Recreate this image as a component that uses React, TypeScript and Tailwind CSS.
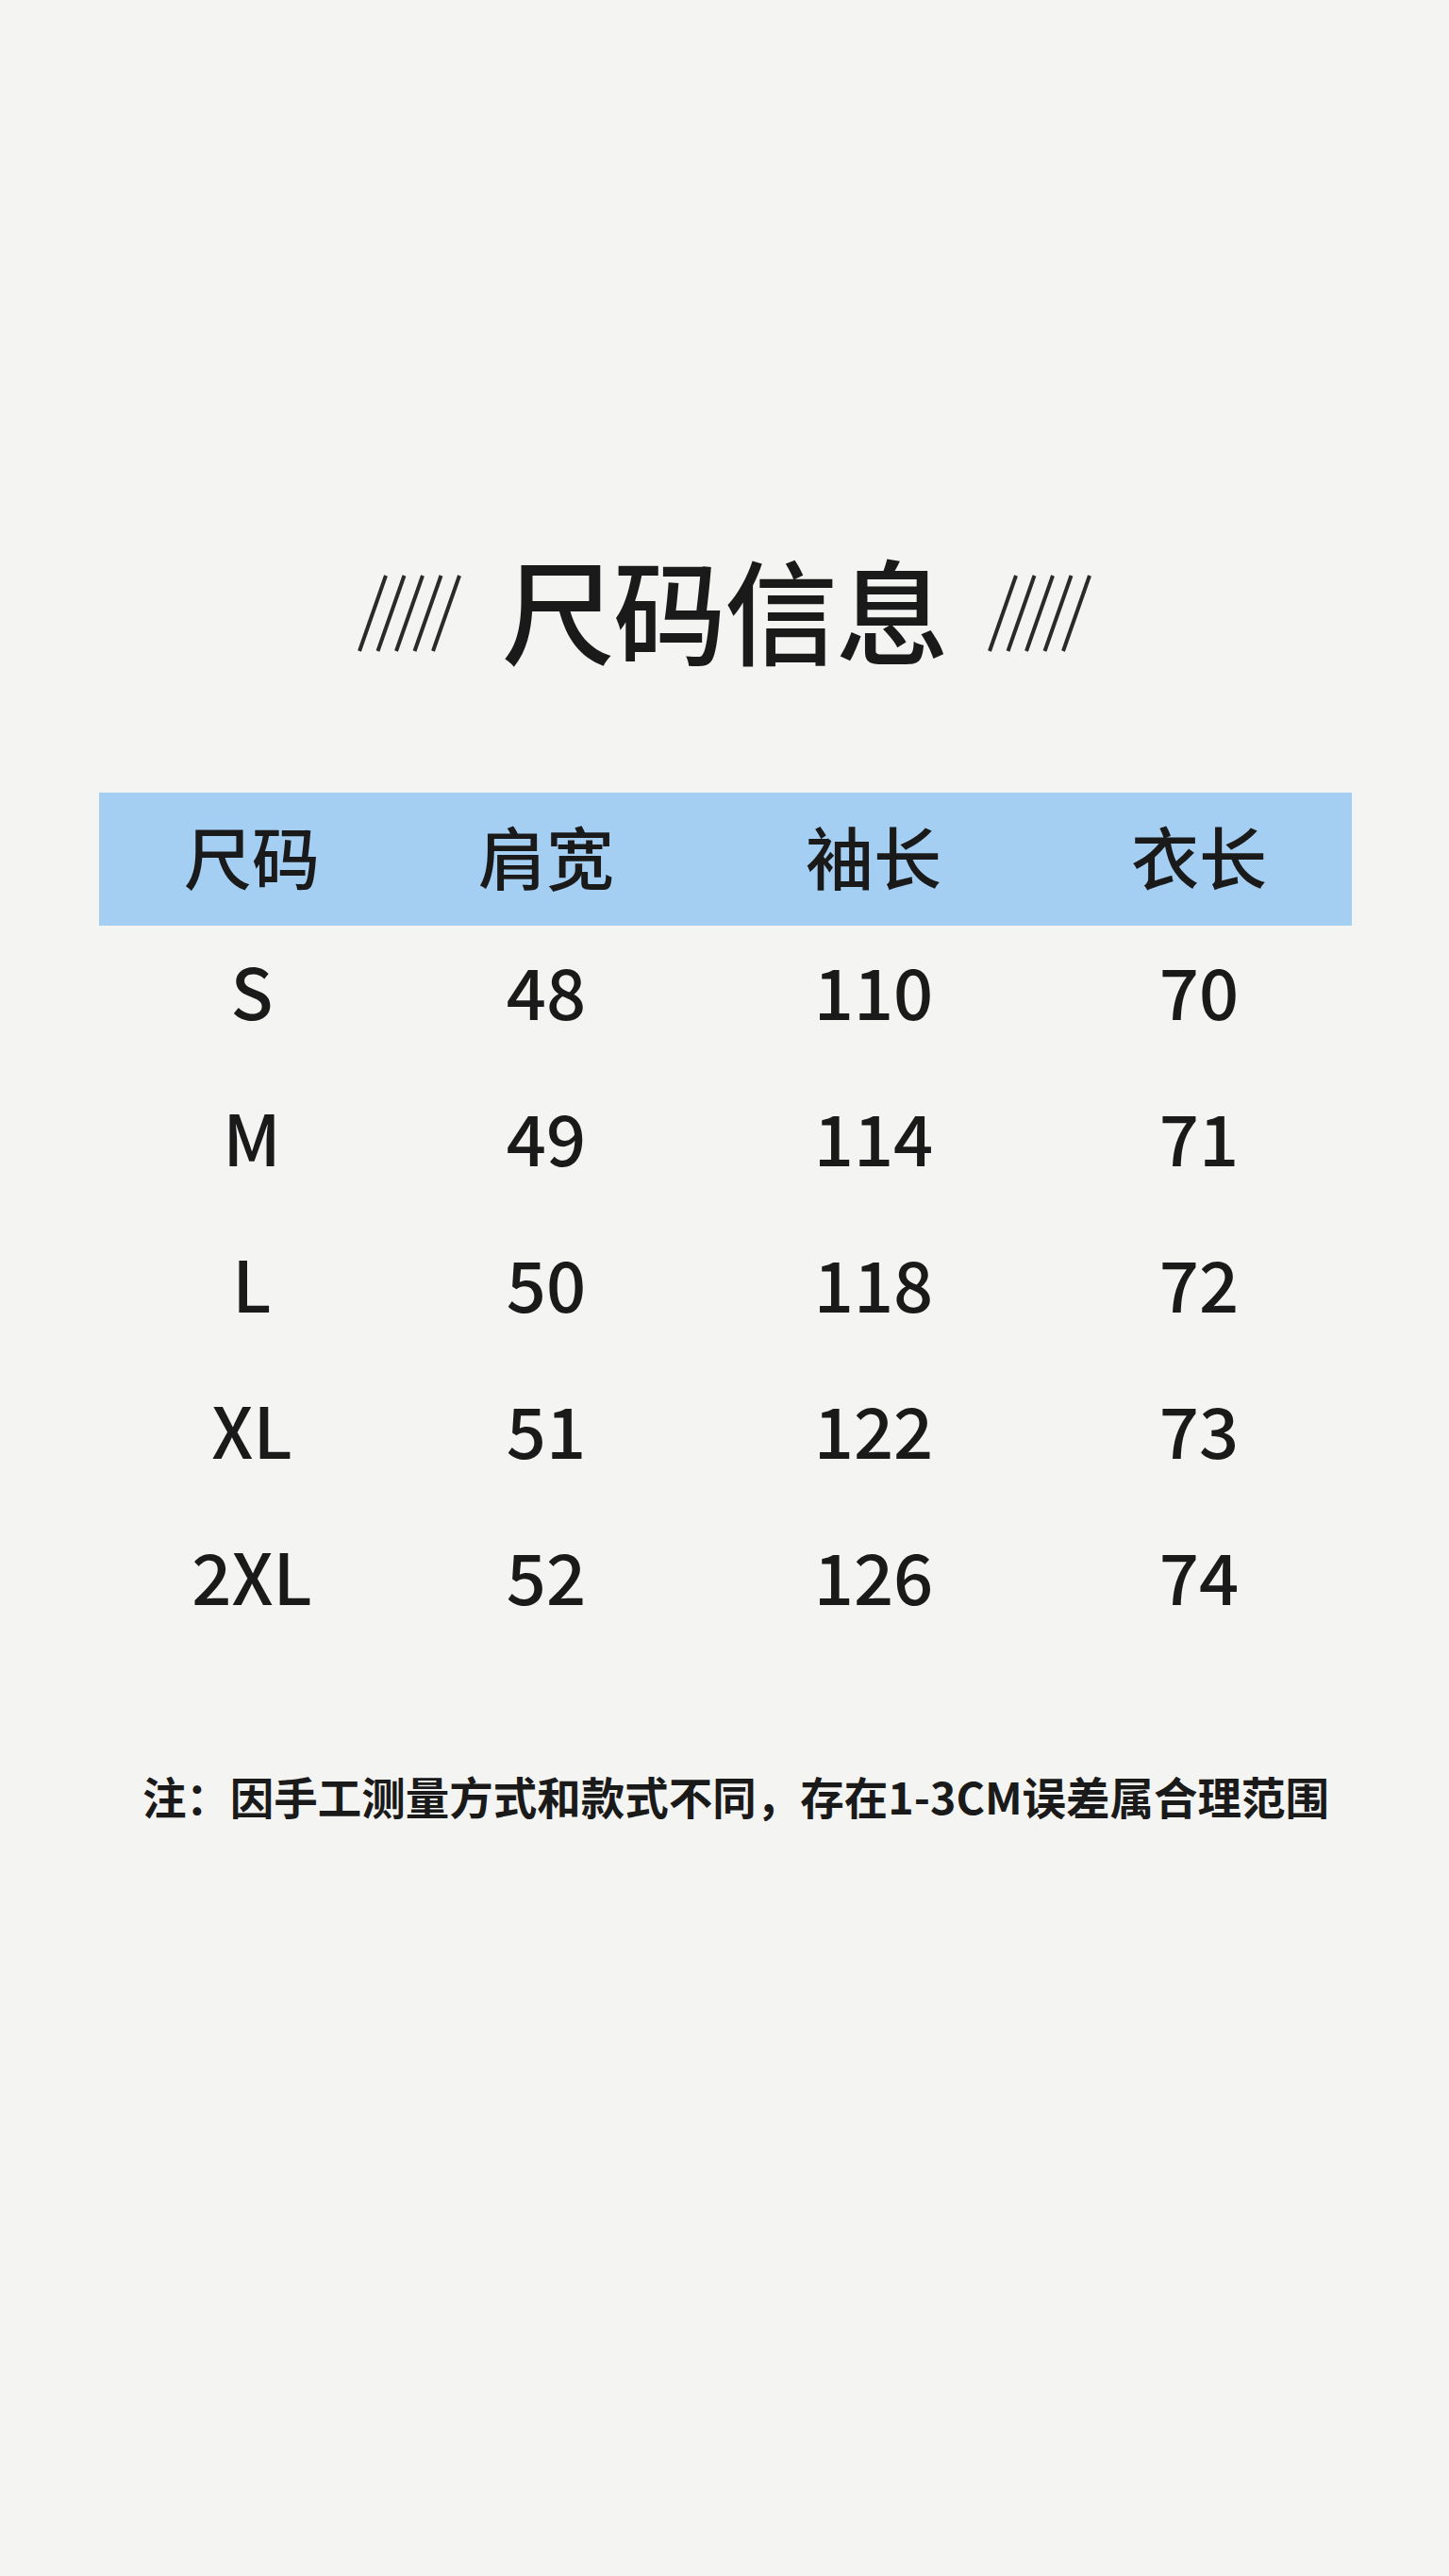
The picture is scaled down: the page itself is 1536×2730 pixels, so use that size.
const rows = [
  ["S", "48", "110", "70"],
  ["M", "49", "114", "71"],
  ["L", "50", "118", "72"],
  ["XL", "51", "122", "73"],
  ["2XL", "52", "126", "74"],
];

const headers = ["尺码", "肩宽", "袖长", "衣长"];

const Slashes = () => (
  <svg width="112" height="84" viewBox="0 0 112 84" className="shrink-0 mt-[12px]">
    {[0, 1, 2, 3, 4].map((i) => (
      <line
        key={i}
        x1={3 + i * 19.5}
        y1={82}
        x2={31 + i * 19.5}
        y2={2}
        stroke="#2a2a2a"
        strokeWidth="4"
      />
    ))}
  </svg>
);

export default function App() {
  return (
    <div
      className="w-[1536px] h-[2730px] bg-[#f4f4f2] text-[#1a1a1a] flex flex-col items-center"
      style={{ fontFamily: '"Noto Sans CJK SC", "Noto Sans", sans-serif' }}
    >
      <div className="mt-[584px] flex items-center gap-[42px]">
        <Slashes />
        <h1 className="text-[120px] leading-none font-medium tracking-[-2px]">尺码信息</h1>
        <Slashes />
      </div>

      <div className="mt-[136px] w-[1328px] ml-[2px]">
        <div className="h-[141px] bg-[#a4cff2] grid grid-cols-[324px_300px_394px_296px] items-center">
          {headers.map((h) => (
            <div key={h} className="text-center text-[72px] leading-none font-medium -mt-[10px]">
              {h}
            </div>
          ))}
        </div>
        <div className="-mt-[10px]">
          {rows.map((r) => (
            <div
              key={r[0]}
              className="h-[155px] grid grid-cols-[324px_300px_394px_296px] items-center"
            >
              {r.map((c, i) => (
                <div key={i} className="text-center text-[74px] leading-none font-medium">
                  {c}
                </div>
              ))}
            </div>
          ))}
        </div>
      </div>

      <p className="mt-[134px] ml-[24px] text-[46.5px] leading-none font-bold">
        注：因手工测量方式和款式不同，存在1-3CM误差属合理范围
      </p>
    </div>
  );
}
